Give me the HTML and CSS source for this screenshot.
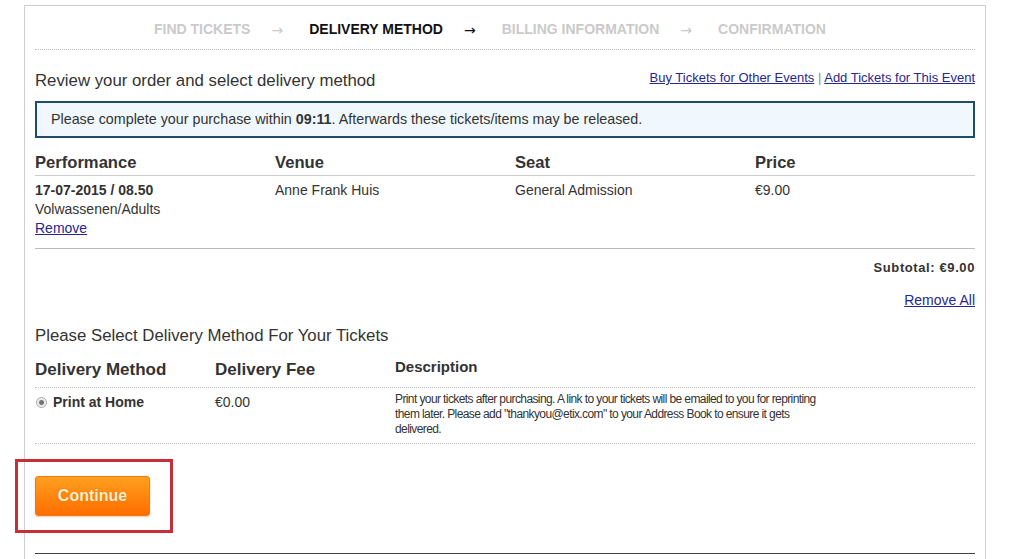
FILE: index.html
```html
<!DOCTYPE html>
<html>
<head>
<meta charset="utf-8">
<link rel="stylesheet" href="styles.css">
</head>
<body>
<div class="panel">
  <div class="steps">
    <span class="step">FIND TICKETS</span>
    <span class="arrow">&rarr;</span>
    <span class="step active">DELIVERY METHOD</span>
    <span class="arrow active">&rarr;</span>
    <span class="step">BILLING INFORMATION</span>
    <span class="arrow">&rarr;</span>
    <span class="step">CONFIRMATION</span>
  </div>

  <div class="review-head">
    <h2 class="title">Review your order and select delivery method</h2>
    <div class="toplinks"><a href="#">Buy Tickets for Other Events</a> <span class="sep">|</span> <a href="#">Add Tickets for This Event</a></div>
  </div>

  <div class="notice">Please complete your purchase within <b>09:11</b>. Afterwards these tickets/items may be released.</div>

  <div class="order">
    <div class="order-head">
      <div class="col">Performance</div>
      <div class="col">Venue</div>
      <div class="col">Seat</div>
      <div class="col last">Price</div>
    </div>
    <div class="order-row">
      <div class="col">
        <div class="strong">17-07-2015 / 08.50</div>
        <div>Volwassenen/Adults</div>
        <div><a href="#">Remove</a></div>
      </div>
      <div class="col">Anne Frank Huis</div>
      <div class="col">General Admission</div>
      <div class="col last">&euro;9.00</div>
    </div>
  </div>

  <div class="subtotal">Subtotal: &euro;9.00</div>
  <div class="remove-all"><a href="#">Remove All</a></div>

  <h2 class="title delivery-title">Please Select Delivery Method For Your Tickets</h2>

  <div class="delivery">
    <div class="del-head">
      <div class="dcol">Delivery Method</div>
      <div class="dcol">Delivery Fee</div>
      <div class="dcol desc-head">Description</div>
    </div>
    <div class="del-row">
      <div class="dcol method"><span class="radio"></span><b>Print at Home</b></div>
      <div class="dcol fee">&euro;0.00</div>
      <div class="dcol desc">Print your tickets after purchasing. A link to your tickets will be emailed to you for reprinting them later. Please add "thankyou@etix.com" to your Address Book to ensure it gets delivered.</div>
    </div>
  </div>

  <div class="actions">
    <button class="continue">Continue</button>
  </div>

  <div class="bottom-rule"></div>
</div>
<div class="highlight"></div>
</body>
</html>
```

FILE: styles.css
```css
* { box-sizing: border-box; }
html, body { margin: 0; padding: 0; background: #fff; }
body {
  font-family: "Liberation Sans", Arial, sans-serif;
  color: #333;
  position: relative;
  height: 559px;
  overflow: hidden;
}
a { color: #27278e; text-decoration: underline; }

.panel {
  margin: 5px 0 0 24px;
  width: 962px;
  border: 1px solid #cfcfcf;
  border-bottom: none;
  padding: 0 10px;
  height: 560px;
}

.steps {
  display: flex;
  padding-top: 4px;
  padding-left: 119px;
  line-height: 39px;
  font-size: 14px;
  font-weight: bold;
  border-bottom: 1px dotted #bdbdbd;
  color: #cacaca;
}
.steps .active { color: #111; }
.arrow {
  margin: 0 26px 0 21px;
  font-family: "DejaVu Sans", sans-serif;
  font-weight: normal;
  font-size: 14px;
  position: relative;
  top: 1px;
}

.review-head {
  display: flex;
  justify-content: space-between;
  align-items: flex-start;
  margin-top: 21px;
}
.title {
  margin: 0;
  font-size: 16.8px;
  font-weight: normal;
  line-height: 20px;
  color: #333;
}
.toplinks { font-size: 13px; line-height: 14px; }
.sep { color: #888; }

.notice {
  margin-top: 10px;
  border: 2px solid #1f4d68;
  background: #f0f8fd;
  padding: 0 14px;
  line-height: 33px;
  font-size: 14.3px;
}

.order { font-size: 14px; }
.order-head, .order-row { display: flex; }
.col { width: 240px; }
.col.last { width: 220px; }
.order-head {
  padding-top: 15px;
  padding-bottom: 3px;
  line-height: 19px;
  font-size: 16.6px;
  font-weight: bold;
  border-bottom: 1px solid #cccccc;
}
.order-row {
  padding-top: 5px;
  padding-bottom: 10px;
  line-height: 19px;
  border-bottom: 1px solid #bbbbbb;
}
.strong { font-weight: bold; }

.subtotal {
  margin-top: 12px;
  text-align: right;
  font-size: 13px;
  letter-spacing: 0.6px;
  font-weight: bold;
  line-height: 14px;
}
.remove-all {
  margin-top: 18px;
  text-align: right;
  font-size: 14px;
  line-height: 15px;
}
.delivery-title { margin-top: 18px; }

.delivery { margin-top: 14px; }
.del-head, .del-row { display: flex; align-items: flex-start; }
.dcol { width: 180px; }
.dcol.desc-head, .dcol.desc { width: 430px; }
.del-head {
  font-size: 17px;
  font-weight: bold;
  line-height: 19px;
  padding-bottom: 8px;
  border-bottom: 1px dotted #bdbdbd;
}
.desc-head { font-size: 15px; line-height: 14px; }
.del-row {
  padding-top: 4px;
  padding-bottom: 6px;
  border-bottom: 1px dotted #bdbdbd;
}
.method {
  display: flex;
  align-items: center;
  padding-top: 3px;
  font-size: 14px;
  line-height: 15px;
}
.radio {
  width: 11px;
  height: 11px;
  border-radius: 50%;
  border: 1px solid #a8a8a8;
  background: radial-gradient(circle, #6a6a6a 0, #7a7a7a 2px, #e8e8e8 3px, #f7f7f7 5px);
  margin: 0 6px 0 1px;
}
.fee { padding-top: 3px; font-size: 14px; line-height: 15px; }
.desc { font-size: 12px; letter-spacing: -0.6px; line-height: 15px; }

.actions { margin-top: 32px; }
.continue {
  display: block;
  width: 115px;
  height: 40px;
  border: 1px solid #f07a10;
  border-radius: 3px;
  background: linear-gradient(#ffa01e, #ff6d00);
  color: #fff0cc;
  font-family: "Liberation Sans", Arial, sans-serif;
  font-size: 16px;
  font-weight: bold;
  text-shadow: 0 0 1px #c0560a;
  box-shadow: 0 1px 2px rgba(200, 100, 0, 0.35);
  padding: 0;
}

.bottom-rule {
  margin-top: 37px;
  border-top: 1px solid #444;
}

.highlight {
  position: absolute;
  left: 15px;
  top: 459px;
  width: 158px;
  height: 74px;
  border: 3px solid #c62f38;
}
```
